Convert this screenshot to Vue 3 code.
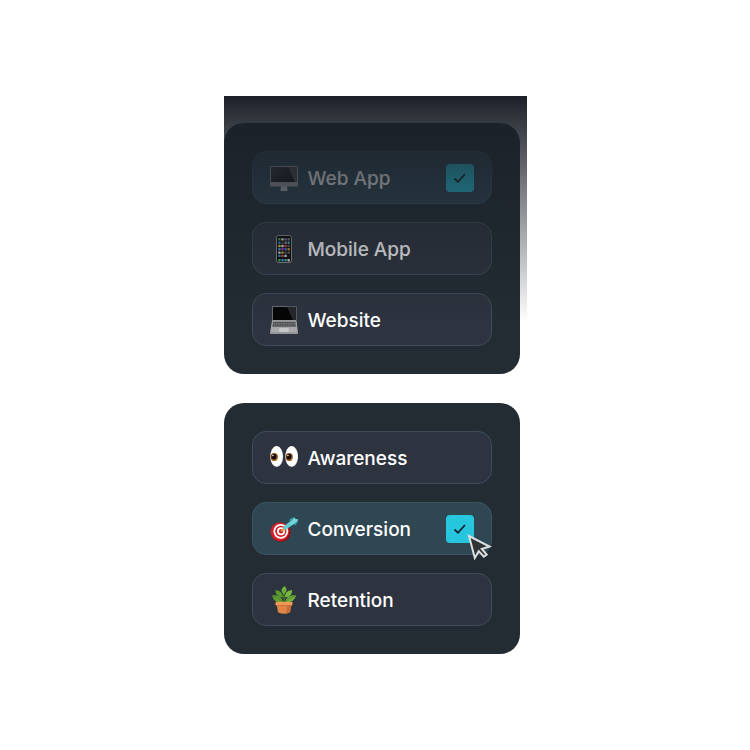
<script setup>
  import { ref } from 'vue'

  const platforms = ref([
    { id: 'web-app', name: 'Web App', checked: true },
    { id: 'mobile-app', name: 'Mobile App', checked: false },
    { id: 'website', name: 'Website', checked: false },
  ])

  const goals = ref([
    { id: 'awareness', name: 'Awareness', checked: false },
    { id: 'conversion', name: 'Conversion', checked: true, pointer: true },
    { id: 'retention', name: 'Retention', checked: false },
  ])

  // home screen of the phone icon, one row of app colours per entry
  const apps = [
    ['#3fae4d', '#d8d8d8', '#8a7bb0', '#777'],
    ['#2d86c9', '#444', '#8d8d8d', '#43a5b5'],
    ['#d9c545', '#ddd', '#d65140', '#555'],
    ['#35a1d1', '#c42ba8', '#3979d8', '#e08a2c'],
    ['#ddd', '#d9b43c', '#555', '#666'],
    ['#2f8fd0', '#d84a3b', '#ddd', '#111'],
    ['#43b554', '#3796dd', '#39b58e', '#ddd'],
  ]
</script>

<template>
  <main>
    <div class="stack">
      <section v-for="(group, index) in [platforms, goals]" :key="index" class="card">
        <label
          v-for="option in group"
          :key="option.id"
          class="option"
          :class="{ selected: option.checked }"
          :for="option.id"
        >
          <svg v-if="option.id == 'web-app'" class="icon" viewBox="0 0 28 28">
            <defs>
              <linearGradient id="screen" x2="1" y2="1">
                <stop stop-color="#37383a" />
                <stop offset="1" stop-color="#080809" />
              </linearGradient>
            </defs>
            <path d="M11 22h6l.5 5h-7z" fill="#b4b6ba" />
            <rect y="2" width="28" height="20.5" rx="1" fill="#9c9ea2" />
            <rect x="1" y="3" width="26" height="15" fill="url(#screen)" />
            <path d="M18 3h9v15h-2z" fill="#4a4b4e" />
          </svg>

          <svg v-else-if="option.id == 'mobile-app'" class="icon" viewBox="0 0 28 28">
            <rect x="6.5" y=".5" width="15" height="27" rx="2" fill="#090909" stroke="#8b8d91" />
            <template v-for="(row, y) in apps" :key="y">
              <rect
                v-for="(color, x) in row"
                :key="x"
                :x="8.2 + x * 3.1"
                :y="y == 6 ? 24 : 3.2 + y * 3.3"
                width="2.4"
                height="2.4"
                rx=".4"
                :fill="color"
              />
            </template>
          </svg>

          <svg v-else-if="option.id == 'website'" class="icon" viewBox="0 0 28 28">
            <rect x="2" width="24.5" height="15" rx="1" fill="#85878a" />
            <rect x="2.8" y=".8" width="23" height="13.2" fill="#050506" />
            <path d="M17 .8h8.8V14h-3z" fill="#26272a" />
            <path d="M2 14.5h24.5L28 27q0 1-1 1H1q-1 0-1-1z" fill="#a8a8a9" />
            <path d="M2.8 15.5h22.8l.8 5.5H2z" fill="#737476" />
            <path
              d="M3.5 16.5h21.5M3.2 18.2h22M3 19.8h22.5"
              stroke="#3e3f42"
              stroke-width=".9"
              stroke-dasharray="1.2 .5"
            />
            <path d="M9.5 22h9l.4 4H9z" fill="#c6c6c7" />
            <path d="M.2 27h27.6" stroke="#77787a" stroke-width=".8" />
          </svg>

          <svg v-else-if="option.id == 'awareness'" class="icon" viewBox="0 0 28 28">
            <g v-for="x in [0, 15]" :key="x" :transform="`translate(${x} 0)`">
              <ellipse cx="6.7" cy="12.6" rx="6.4" ry="10.5" fill="#d8dbe2" />
              <ellipse cx="6.5" cy="12.3" rx="6" ry="10" fill="#fff" />
              <ellipse cx="4.2" cy="13" rx="3.6" ry="4" fill="#8a4f18" />
              <ellipse cx="4.5" cy="14.2" rx="2.7" ry="2.5" fill="#b36a21" />
              <ellipse cx="4" cy="12.7" rx="2.4" ry="2.8" fill="#160b08" />
              <circle cx="2.9" cy="11.5" r=".8" fill="#fff" />
            </g>
          </svg>

          <svg v-else-if="option.id == 'conversion'" class="icon" viewBox="0 0 28 28">
            <ellipse cx="10.8" cy="17.4" rx="9.8" ry="9.6" fill="#8f1116" />
            <circle cx="9.9" cy="16.6" r="9.4" fill="#d41f28" />
            <circle cx="10.8" cy="16.3" r="7.4" fill="#fff" />
            <circle cx="10.8" cy="16.3" r="5.6" fill="#d41f28" />
            <circle cx="11" cy="16.3" r="4" fill="#fff" />
            <circle cx="11.1" cy="16.3" r="2.2" fill="#d41f28" />
            <path d="M11.2 16.2l4.500-3.700" stroke="#d9a441" stroke-width="2" />
            <path d="M13.500 11.500L20.500 6l2.700 3.600-7.400 5q-3.200 0-2.300-3.100z" fill="#63cbd2" />
            <path d="M20 7.500l-.7-3 4-2.300.6 3zM22.500 9.300l3.100.9 2.400-4-3-.5z" fill="#319aa7" />
            <path d="M20 7.500l4.500-5.300 1.200 2 2.300-.2-.4 2.200-6 4z" fill="#79d5da" />
          </svg>

          <svg v-else class="icon" viewBox="0 0 28 28">
            <path
              d="M14 18V5M14 17L5.5 11.5M14 17l8.5-5.5M14 11L8.5 6M14 11l5-4"
              fill="none"
              stroke="#467b25"
              stroke-width="1.4"
            />
            <path d="M13.800 8.500q-5.300-4.300.7-8.500 4.800 4-.7 8.500z" fill="#6cae38" />
            <path d="M13 11.500Q5 11 5.500 4q7 .5 7.500 7.500z" fill="#589b2c" />
            <path d="M15 11.500q-.5-7 7-7.500 .5 7-7 7.500z" fill="#79b83f" />
            <path d="M13 16Q4.500 18 2 9.500q9-1.500 11 6.500z" fill="#629f31" />
            <path d="M15 16q2-8 11.300-6.500-2.800 8-11.300 6.500z" fill="#6fae38" />
            <path d="M13 16Q7 10.500 2.300 10M15 16q5-5.500 10.800-6" fill="none" stroke="#3c7421" stroke-width=".6" />
            <path d="M6.500 18h15L20 26.200Q14 29.500 8 26.200z" fill="#df8547" />
            <path d="M17 19h4.500L20 26.200l-3.500 1.300z" fill="#c96c35" />
            <rect x="5.500" y="15.700" width="17" height="3.800" rx="1.200" fill="#f09a58" />
            <path d="M6.800 19.500h14.500" stroke="#b9622e" stroke-width=".6" />
          </svg>

          <span class="name">{{ option.name }}</span>

          <span class="box">
            <input :id="option.id" v-model="option.checked" type="checkbox" />
            <svg v-if="option.checked" class="check" viewBox="0 0 28 28">
              <path d="M8.500 14.500l3.500 3.300L19 10" />
            </svg>
          </span>

          <svg v-if="option.pointer" class="pointer" viewBox="0 0 26 26">
            <path d="M2 2l20.500 10.500-7.700 2.500 4.900 5.500-2.900 2.200-5-5.500-4 6.800z" />
          </svg>
        </label>
      </section>
      <div class="fade"></div>
    </div>
  </main>
</template>

<style>
  body {
    margin: 0;
    background-color: #fff;
  }
</style>

<style scoped>
  main {
    min-height: 100vh;
    display: flex;
    align-items: center;
    justify-content: center;
  }
  .stack {
    position: relative;
    box-sizing: border-box;
    width: 100%;
    max-width: 303px;
    padding: 27px 7px 0 0;
    display: flex;
    flex-direction: column;
    gap: 29px;
  }
  .card {
    padding: 28px;
    display: flex;
    flex-direction: column;
    gap: 18px;
    border-radius: 20px;
    background-color: #222c32;
  }
  .option {
    position: relative;
    box-sizing: border-box;
    min-height: 53px;
    padding: 0 17px;
    display: flex;
    align-items: center;
    gap: 10px;
    border: 1px solid #3f4c5a;
    border-radius: 14px;
    background-color: #2d343f;
    cursor: pointer;
  }
  .selected {
    background-color: #2e4753;
    border-color: #3c5361;
  }
  .icon {
    width: 28px;
    height: 28px;
    flex: none;
  }
  .name {
    flex: 1;
    padding-top: 2px;
    color: #fff;
    font: 500 19px/24px Inter, sans-serif;
  }
  .box {
    display: grid;
  }
  .box > * {
    grid-area: 1 / 1;
    width: 28px;
    height: 28px;
    margin: 0;
  }
  input {
    appearance: none;
    border-radius: 4px;
    cursor: pointer;
  }
  input:checked {
    background-color: #26c6de;
  }
  .check {
    fill: none;
    stroke: #172127;
    stroke-width: 1.8;
    pointer-events: none;
  }
  .pointer {
    position: absolute;
    right: -2px;
    bottom: -6px;
    width: 26px;
    height: 26px;
    fill: #303436;
    stroke: #dcdfe0;
    stroke-width: 2;
    pointer-events: none;
  }
  /* darkens the first card towards its top */
  .fade {
    position: absolute;
    top: 0;
    left: 0;
    right: 0;
    height: 226px;
    background: linear-gradient(#1b2028, rgba(27, 33, 38, 0));
    pointer-events: none;
  }
</style>
